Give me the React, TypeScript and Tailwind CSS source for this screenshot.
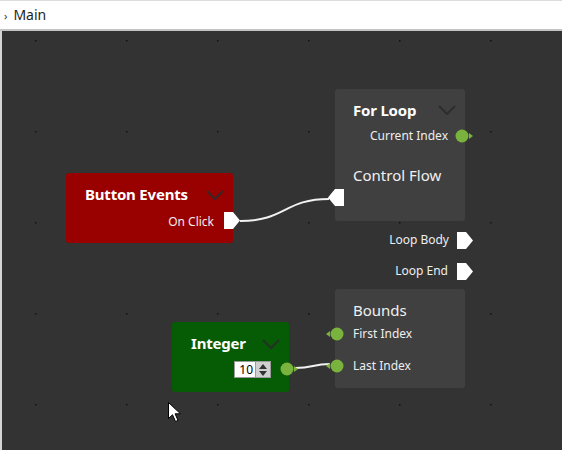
import React from "react";

const FONT = { fontFamily: '"Noto Sans", "Open Sans", Arial, sans-serif' };

function Chevron({ className }: { className: string }) {
  return (
    <svg className={className} width="18" height="10" viewBox="0 0 18 10" fill="none">
      <path d="M1 1 L9 9 L17 1" stroke="#2a2a2a" strokeWidth="2.2" strokeOpacity="0.85" />
    </svg>
  );
}

function FlowOut({ className }: { className: string }) {
  return (
    <svg className={className} width="16" height="17" viewBox="0 0 16 17">
      <path d="M0 0 H9 L16 8.5 L9 17 H0 Z" fill="#ffffff" />
    </svg>
  );
}

function FlowIn({ className }: { className: string }) {
  return (
    <svg className={className} width="16" height="17" viewBox="0 0 16 17">
      <path d="M16 0 H7 L0 8.5 L7 17 H16 Z" fill="#ffffff" />
    </svg>
  );
}

function DataOut({ className }: { className: string }) {
  return (
    <svg className={className} width="19" height="14" viewBox="0 0 19 14">
      <circle cx="7" cy="7" r="6.5" fill="#79b33d" />
      <path d="M14 4 L18 7 L14 10 Z" fill="#79b33d" />
    </svg>
  );
}

function DataIn({ className }: { className: string }) {
  return (
    <svg className={className} width="19" height="14" viewBox="0 0 19 14">
      <circle cx="12" cy="7" r="6.5" fill="#79b33d" />
      <path d="M5 4 L1 7 L5 10 Z" fill="#79b33d" />
    </svg>
  );
}

const dotsX = [35, 126, 217, 308, 399, 490];
const dotsY = [9, 100, 191, 282, 373];

const title = "h-[20px] text-[15px] font-bold tracking-[-0.2px] text-white leading-[20px]";
const label = "h-[18px] text-[12px] text-[#eeeeee] leading-[18px]";
const heading = "h-[22px] text-[15px] text-[#f0f0f0] leading-[22px]";

export default function App() {
  return (
    <div className="w-[562px] h-[450px] overflow-hidden bg-white" style={FONT}>
      {/* Tab bar */}
      <div className="h-[31px] border-t border-[#dcdcdc] border-b-2 border-b-[#c4c4c4] bg-white flex items-center">
        <span className="ml-[4px] text-[11px] text-[#333] leading-none">›</span>
        <span className="ml-[6px] text-[14px] text-[#1e1e1e] leading-none">Main</span>
      </div>

      {/* Canvas */}
      <div className="relative h-[419px] bg-[#333333] border-l-2 border-l-[#d6d6d6]">
        <svg className="absolute inset-0" width="560" height="419">
          {dotsY.map((y) =>
            dotsX.map((x) => <rect key={`${x}-${y}`} x={x - 2} y={y} width="1.5" height="1.5" fill="#111" />)
          )}
          <path d="M238 190 C284 190 282 168 327 168" stroke="#f2f2f2" strokeWidth="2" fill="none" />
          <path d="M293 337 C312 337 310 333 328 333" stroke="#f2f2f2" strokeWidth="2" fill="none" />
        </svg>

        {/* For Loop */}
        <div className="absolute left-[333px] top-[58px] w-[130px] h-[132px] bg-[#404040] rounded-[3px] flex flex-col">
          <div className={`mt-[11px] pl-[18px] ${title}`}>For Loop</div>
          <Chevron className="absolute left-[103px] top-[16px]" />
          <div className={`mt-[7px] pr-[17px] text-right ${label}`}>Current Index</div>
          <div className={`mt-[19px] pl-[18px] ${heading}`}>Control Flow</div>
          <DataOut className="absolute left-[120px] top-[40px]" />
          <FlowIn className="absolute left-[-7px] top-[100px]" />
        </div>

        <div className={`absolute left-[360px] top-[200px] w-[87px] text-right ${label}`}>Loop Body</div>
        <FlowOut className="absolute left-[455px] top-[201px]" />
        <div className={`absolute left-[360px] top-[231px] w-[86px] text-right ${label}`}>Loop End</div>
        <FlowOut className="absolute left-[455px] top-[232px]" />

        {/* Button Events */}
        <div className="absolute left-[64px] top-[142px] w-[167px] h-[70px] bg-[#990000] rounded-[3px] flex flex-col">
          <div className={`mt-[11px] pl-[19px] ${title}`}>Button Events</div>
          <Chevron className="absolute left-[140px] top-[17px]" />
          <div className={`mt-[9px] pr-[19px] text-right ${label}`}>On Click</div>
          <FlowOut className="absolute left-[158px] top-[39px]" />
        </div>

        {/* Integer */}
        <div className="absolute left-[170px] top-[291px] w-[117px] h-[70px] bg-[#055c05] rounded-[3px] flex flex-col">
          <div className={`mt-[11px] pl-[19px] ${title}`}>Integer</div>
          <Chevron className="absolute left-[90px] top-[17px]" />
          <div className="mt-[8px] ml-[62px] flex h-[17px] w-[37px] border border-[#9a9a9a] bg-white">
            <span className="w-[20px] pr-[2px] text-right text-[12px] leading-[15px] text-black">10</span>
            <span className="flex-1 bg-[#d0d0d0] border-l border-[#9a9a9a] flex flex-col items-center justify-center gap-[2px]">
              <svg width="8" height="5" viewBox="0 0 8 5"><path d="M0 5 L4 0 L8 5 Z" fill="#333" /></svg>
              <svg width="8" height="5" viewBox="0 0 8 5"><path d="M0 0 L4 5 L8 0 Z" fill="#333" /></svg>
            </span>
          </div>
          <DataOut className="absolute left-[108px] top-[40px]" />
        </div>

        {/* Bounds */}
        <div className="absolute left-[333px] top-[258px] w-[130px] h-[99px] bg-[#404040] rounded-[3px] flex flex-col">
          <div className={`mt-[10px] pl-[18px] ${heading}`}>Bounds</div>
          <div className={`mt-[4px] pl-[18px] ${label}`}>First Index</div>
          <div className={`mt-[14px] pl-[18px] ${label}`}>Last Index</div>
          <DataIn className="absolute left-[-10px] top-[38px]" />
          <DataIn className="absolute left-[-10px] top-[70px]" />
        </div>

        {/* Cursor */}
        <svg className="absolute left-[166px] top-[371px]" width="14" height="21" viewBox="0 0 14 21">
          <path d="M0.5 0.5 L0.5 16.5 L4.5 12.8 L7.5 19.5 L10 18.4 L7.1 11.8 L12.5 11.8 Z" fill="#ffffff" stroke="#000000" strokeWidth="1" />
        </svg>
      </div>
    </div>
  );
}
